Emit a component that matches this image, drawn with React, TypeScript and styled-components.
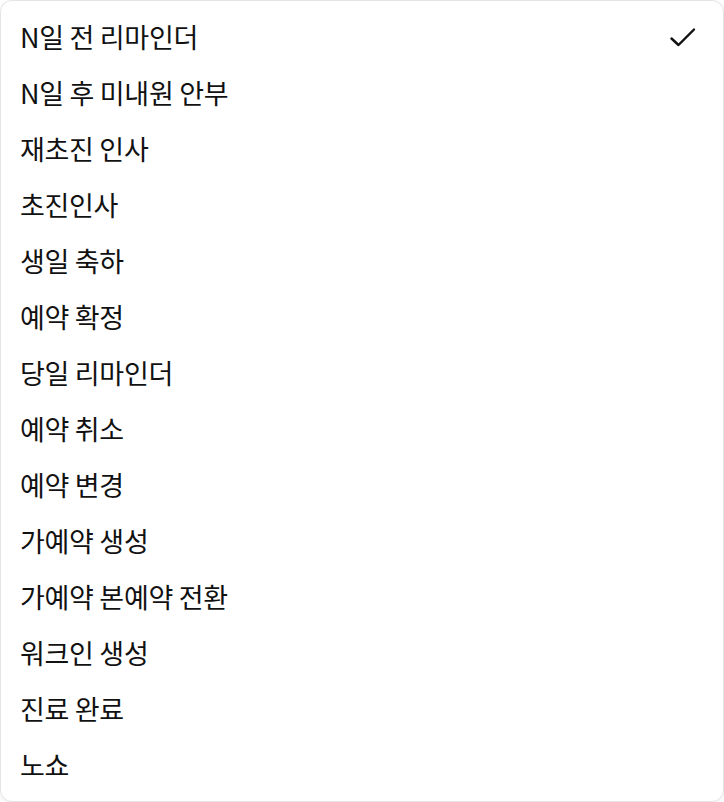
import React from "react";
import styled, { createGlobalStyle } from "styled-components";

const Global = createGlobalStyle`
  html, body { margin: 0; padding: 0; background: #ffffff; }
  body { font-family: "Noto Sans CJK KR", "Noto Sans", sans-serif; }
  * { box-sizing: border-box; }
`;

const Menu = styled.ul`
  list-style: none;
  margin: 0;
  width: 724px;
  height: 802px;
  padding: 9px 0;
  background: #ffffff;
  border: 1px solid #e4e4e7;
  border-radius: 12px;
  box-shadow: 0 2px 6px rgba(0, 0, 0, 0.06);
  display: flex;
  flex-direction: column;
`;

const Item = styled.li`
  height: 56px;
  flex: 0 0 56px;
  display: flex;
  align-items: center;
  justify-content: space-between;
  padding: 0 23px 0 19px;
  font-size: 27px;
  color: #111111;
  letter-spacing: -0.3px;
  cursor: default;
`;

const Label = styled.span`
  line-height: 1;
  margin-top: -3px;
`;

const CheckIcon = () => (
  <svg width="34" height="34" viewBox="0 0 34 34" fill="none">
    <path
      d="M5.5 17.5 L12.5 24 L28 8.5"
      stroke="#111111"
      strokeWidth="2.4"
      strokeLinecap="round"
      strokeLinejoin="round"
    />
  </svg>
);

const items = [
  "N일 전 리마인더",
  "N일 후 미내원 안부",
  "재초진 인사",
  "초진인사",
  "생일 축하",
  "예약 확정",
  "당일 리마인더",
  "예약 취소",
  "예약 변경",
  "가예약 생성",
  "가예약 본예약 전환",
  "워크인 생성",
  "진료 완료",
  "노쇼",
];

export default function App() {
  return (
    <>
      <Global />
      <Menu>
        {items.map((t, i) => (
          <Item key={t}>
            <Label>{t}</Label>
            {i === 0 && <CheckIcon />}
          </Item>
        ))}
      </Menu>
    </>
  );
}
